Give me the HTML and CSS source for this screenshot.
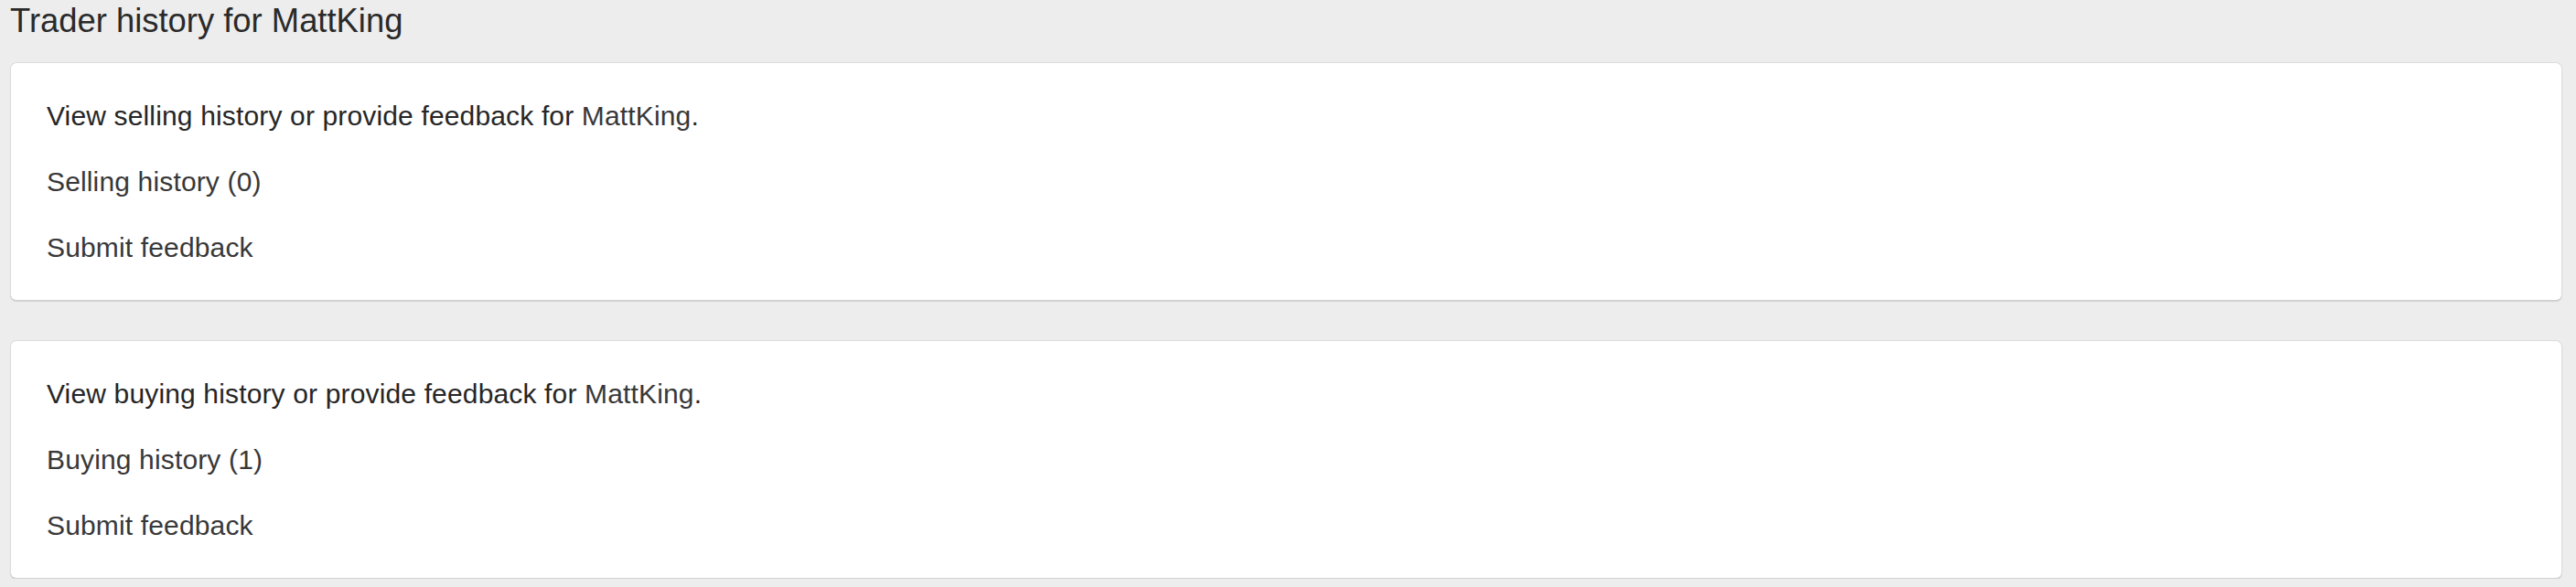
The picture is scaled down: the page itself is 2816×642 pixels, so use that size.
FILE: index.html
```html
<!DOCTYPE html>
<html lang="en">
<head>
<meta charset="utf-8">
<title>Trader history for MattKing</title>
<link rel="stylesheet" href="styles.css">
</head>
<body>
<main class="page">
  <h1 class="page-title">Trader history for MattKing</h1>
  <section class="card">
    <p class="card-text">View selling history or provide feedback for <a class="link" href="#">MattKing</a>.</p>
    <p class="card-text"><a class="link" href="#">Selling history (0)</a></p>
    <p class="card-text"><a class="link" href="#">Submit feedback</a></p>
  </section>
  <section class="card">
    <p class="card-text">View buying history or provide feedback for <a class="link" href="#">MattKing</a>.</p>
    <p class="card-text"><a class="link" href="#">Buying history (1)</a></p>
    <p class="card-text"><a class="link" href="#">Submit feedback</a></p>
  </section>
</main>
</body>
</html>
```

FILE: styles.css
```css
html, body {
  margin: 0;
  padding: 0;
  background: #ededed;
}

body {
  font-family: "Liberation Sans", Arial, Helvetica, sans-serif;
  color: #262626;
}

.page {
  padding: 1px 15px 0 11px;
}

.page-title {
  margin: 0 0 24px 0;
  font-size: 36.4px;
  line-height: 43px;
  font-weight: 400;
  color: #2a2a2a;
}

.card {
  background: #fff;
  border: 1px solid #dcdcdc;
  border-bottom-color: #cfcfcf;
  border-radius: 7px;
  box-shadow: 0 1px 1px rgba(0, 0, 0, 0.12);
  padding: 36px 39px;
  margin-bottom: 43px;
}

.card:last-child {
  margin-bottom: 0;
}

.card-text {
  margin: 0 0 28.8px 0;
  font-size: 30px;
  line-height: 43.2px;
  letter-spacing: 0.15px;
}

.card-text:last-child {
  margin-bottom: 0;
}

.link {
  color: #383838;
  text-decoration: none;
}
```
